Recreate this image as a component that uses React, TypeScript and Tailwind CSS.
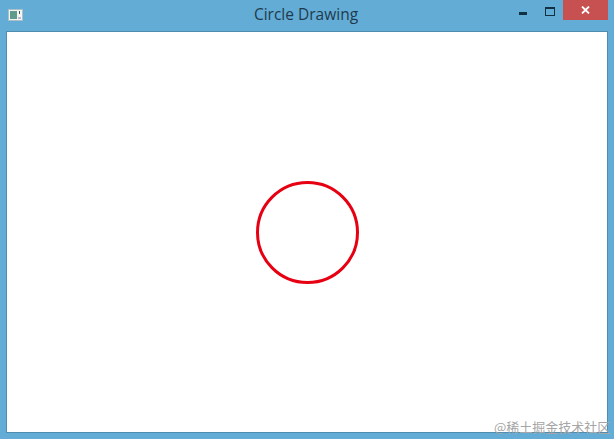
function AppIcon() {
  return (
    <svg width="15" height="12" viewBox="0 0 15 12" className="block">
      <rect x="0" y="0" width="15" height="12" fill="#f4f4f0" />
      <rect x="0.5" y="0.5" width="14" height="11" fill="none" stroke="#a9c0ca" />
      <rect x="2" y="2" width="7" height="8" fill="#5f9a8c" />
      <rect x="11" y="2" width="1" height="3" fill="#46565f" />
      <rect x="10" y="8" width="3" height="2" fill="#c4b6cd" />
    </svg>
  )
}

export default function App() {
  return (
    <div className="relative flex h-[439px] w-[614px] flex-col overflow-hidden bg-[#63acd6] font-['Open_Sans',sans-serif]">
      {/* Title bar */}
      <div className="flex h-[31px] shrink-0 items-start">
        <div className="flex-1 pl-2 pt-[9px]">
          <AppIcon />
        </div>
        <div className="mr-[4px] pt-[4px] text-[15.5px] leading-[21px] text-[#1f3a4d]">
          Circle Drawing
        </div>
        <div className="flex flex-1 items-start justify-end pr-[6px]">
          <div className="mt-[12px] h-[3px] w-[8px] bg-[#12303f]" />
          <div className="ml-[18px] mt-[7px] h-[9px] w-[10px] border border-t-[2px] border-[#12303f]" />
          <div className="ml-[8px] flex h-[20px] w-[45px] items-center justify-center bg-[#c75050]">
            <svg width="9" height="8" viewBox="0 0 9 8">
              <path d="M1 0.5 L8 7.5 M8 0.5 L1 7.5" stroke="#ffffff" strokeWidth="1.8" fill="none" />
            </svg>
          </div>
        </div>
      </div>

      {/* Client area */}
      <div className="mx-[6px] mb-[6px] flex flex-1 items-center justify-center border border-[#4f8db0] bg-white">
        <svg width="104" height="106" viewBox="0 0 104 106">
          <circle cx="52.5" cy="53.5" r="50" fill="none" stroke="#e60012" strokeWidth="3" />
        </svg>
      </div>

      {/* Watermark */}
      <div className="absolute left-[494px] top-[418px] whitespace-nowrap font-['Noto_Sans_CJK_SC',sans-serif] text-[13px] leading-[18px] text-[#a6a6a6]">
        @稀土掘金技术社区
      </div>
    </div>
  )
}
